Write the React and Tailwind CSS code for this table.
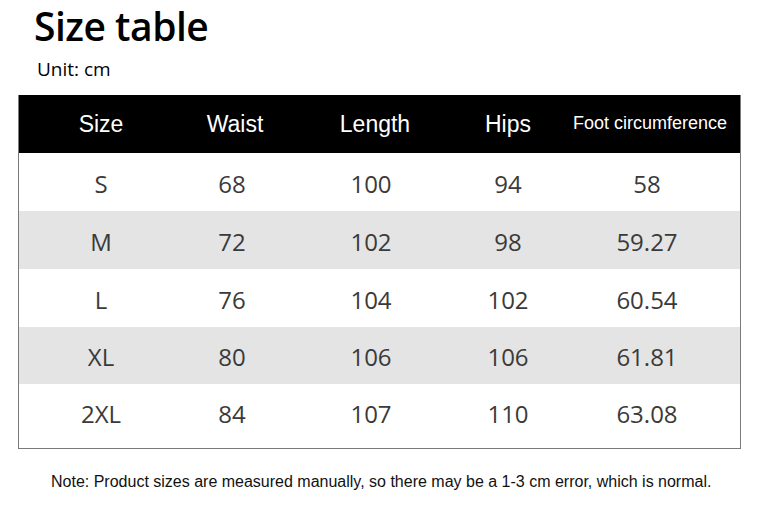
import React from 'react';

const rows = [
  ['S', '68', '100', '94', '58'],
  ['M', '72', '102', '98', '59.27'],
  ['L', '76', '104', '102', '60.54'],
  ['XL', '80', '106', '106', '61.81'],
  ['2XL', '84', '107', '110', '63.08'],
];

const cols = 'grid grid-cols-[164px_104px_174px_94px_186px]';
// body values sit a few px left of the header labels in cols 2 and 3
const cellPad = ['', 'pr-[6px]', 'pr-[6px]', '', 'pr-[2px]'];

export default function App() {
  return (
    <div className="w-[762px] h-[507px] bg-white relative overflow-hidden">
      <div className="pl-[34px] pt-[2px]">
        <h1 className="font-['Open_Sans',sans-serif] font-semibold text-[39px] leading-[48px] text-black tracking-[-0.5px]">
          Size table
        </h1>
        <div className="font-['Open_Sans',sans-serif] text-[19px] leading-[22px] text-black mt-[8px] pl-[3px]">
          Unit: cm
        </div>
      </div>

      <div className="ml-[18px] mt-[15px] w-[723px] border-x border-b border-[#7a7a7a]">
        <div className={`${cols} bg-black h-[58px] items-center text-white font-['Liberation_Sans',Arial,sans-serif]`}>
          <div className="text-center text-[23px]">Size</div>
          <div className="text-center text-[23px]">Waist</div>
          <div className="text-center text-[23px] pl-[2px]">Length</div>
          <div className="text-center text-[23px]">Hips</div>
          <div className="text-center text-[18px] pb-[2px] pl-[4px]">Foot circumference</div>
        </div>
        {rows.map((r, i) => (
          <div
            key={r[0]}
            className={`${cols} items-center font-['Open_Sans',sans-serif] text-[24px] text-[#3a3a3a] ${i % 2 === 1 ? 'bg-[#e4e4e4] h-[57.5px]' : 'bg-white h-[58px]'} ${i === 4 ? 'h-[64px] items-start pt-[12px]' : 'pt-[4px]'}`}
          >
            {r.map((c, j) => (
              <div key={j} className={`text-center ${cellPad[j]}`}>{c}</div>
            ))}
          </div>
        ))}
      </div>

      <p className="mt-[23px] pl-[51px] font-['Liberation_Sans',Arial,sans-serif] text-[16px] leading-[20px] text-[#111]">
        Note: Product sizes are measured manually, so there may be a 1-3 cm error, which is normal.
      </p>
    </div>
  );
}
